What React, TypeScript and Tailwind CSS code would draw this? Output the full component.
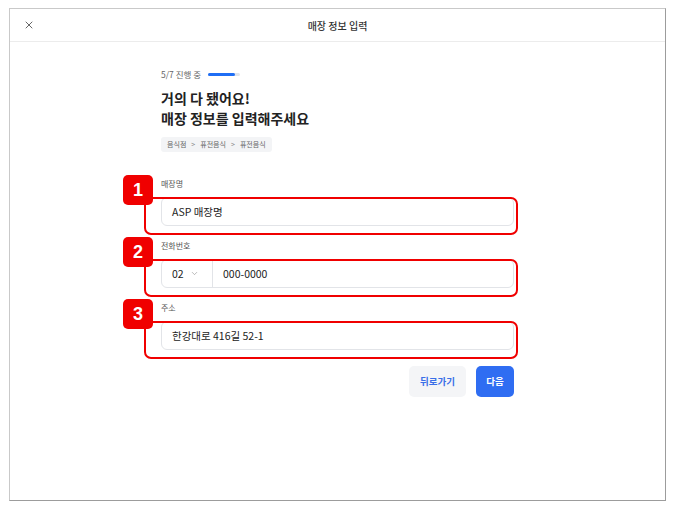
import { ChevronDown, X } from "lucide-react";

const font = { fontFamily: '"Noto Sans CJK KR", "Noto Sans", sans-serif' };

function Marker({ n }: { n: number }) {
  return (
    <>
      <div className="pointer-events-none absolute left-[-17px] top-[0px] h-[38px] w-[374px] rounded-[7px] border-2 border-[#f00000]" />
      <div className="pointer-events-none absolute left-[-38px] top-[-22px] flex h-[30px] w-[30px] items-center justify-center rounded-[5px] bg-[#f00000] text-[18px] font-bold text-white [font-family:'Liberation_Sans',Arial,sans-serif]">
        {n}
      </div>
    </>
  );
}

function Field({
  label,
  n,
  children,
}: {
  label: string;
  n: number;
  children: React.ReactNode;
}) {
  return (
    <div className="flex flex-col">
      <div className="mb-[7px] h-[12px] text-[8px] leading-[12px] text-[#555]">{label}</div>
      <div className="relative">
        {children}
        <Marker n={n} />
      </div>
    </div>
  );
}

export default function App() {
  return (
    <div className="min-h-[509px] w-[673px] bg-white pl-[9px] pt-[8px]" style={font}>
      <div className="flex h-[493px] w-[657px] flex-col border border-[#c9c9c9] border-b-[#9c9c9c] border-r-[#9c9c9c] bg-white">
        <header className="relative flex h-[33px] items-center justify-center border-b border-[#ececec]">
          <X className="absolute left-[13px] top-[10px] h-[12px] w-[12px] text-[#555]" strokeWidth={1.8} />
          <h1 className="text-[10px] font-medium text-[#333]">매장 정보 입력</h1>
        </header>

        <main className="mx-auto flex w-[353px] flex-col pt-[26px]">
          <div className="flex h-[12px] items-center gap-[7px]">
            <span className="text-[8.5px] text-[#666]">5/7 진행 중</span>
            <div className="h-[3px] w-[32px] rounded-full bg-[#dfe3ea]">
              <div className="h-[3px] w-[27px] rounded-full bg-[#1f6ef5]" />
            </div>
          </div>

          <h2 className="mt-[8px] text-[14px] font-bold leading-[20px] text-[#222]">
            거의 다 됐어요!
            <br />
            매장 정보를 입력해주세요
          </h2>

          <div className="mt-[9px] flex h-[15px] w-fit items-center gap-[5px] rounded-[3px] bg-[#f3f4f6] px-[6px] text-[7px] text-[#666]">
            <span>음식점</span>
            <span className="text-[#888]">&gt;</span>
            <span>퓨전음식</span>
            <span className="text-[#888]">&gt;</span>
            <span>퓨전음식</span>
          </div>

          <div className="mt-[26px] flex flex-col gap-[14px]">
            <Field label="매장명" n={1}>
              <div className="flex h-[29px] items-center rounded-[6px] border border-[#e2e4e8] bg-white px-[10px] text-[10.5px] text-[#222]">
                ASP 매장명
              </div>
            </Field>

            <Field label="전화번호" n={2}>
              <div className="flex h-[29px] items-center rounded-[6px] border border-[#e2e4e8] bg-white text-[10.5px] text-[#222]">
                <div className="flex h-full w-[51px] items-center gap-[6px] border-r border-[#e2e4e8] pl-[10px]">
                  <span>02</span>
                  <ChevronDown className="h-[9px] w-[9px] text-[#888]" strokeWidth={1.5} />
                </div>
                <span className="pl-[10px]">000-0000</span>
              </div>
            </Field>

            <Field label="주소" n={3}>
              <div className="flex h-[29px] items-center rounded-[6px] border border-[#e2e4e8] bg-white px-[10px] text-[10.5px] text-[#222]">
                한강대로 416길 52-1
              </div>
            </Field>
          </div>

          <div className="mt-[16px] flex justify-end gap-[10px]">
            <button className="h-[31px] w-[57px] rounded-[5px] bg-[#f4f5f7] text-[9.5px] font-semibold text-[#3a6fe8]">
              뒤로가기
            </button>
            <button className="h-[31px] w-[38px] rounded-[5px] bg-[#2f6df2] text-[9.5px] font-semibold text-white">
              다음
            </button>
          </div>
        </main>
      </div>
    </div>
  );
}
